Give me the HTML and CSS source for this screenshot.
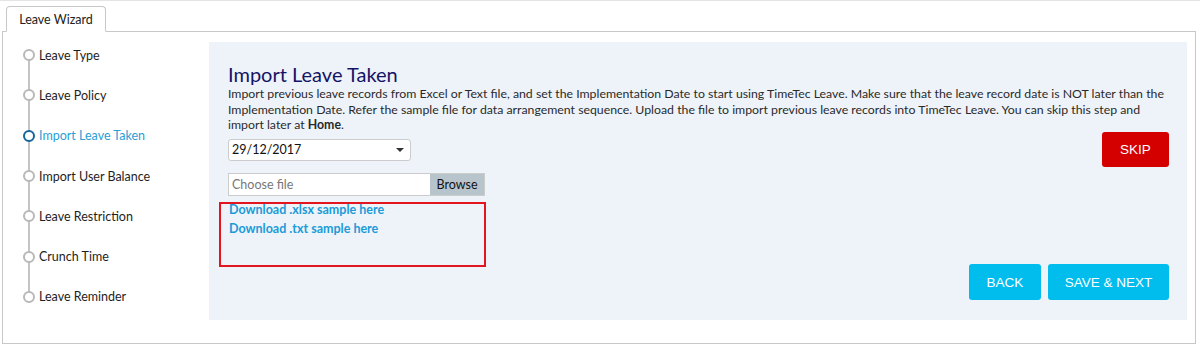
FILE: index.html
```html
<!DOCTYPE html>
<html lang="en">
<head>
  <meta charset="UTF-8">
  <title>Leave Wizard</title>
  <link rel="stylesheet" href="styles.css">
</head>
<body>
  <div class="tabs">
    <div class="tab">Leave Wizard</div>
  </div>
  <div class="wizard">
    <ul class="steps">
      <li class="step">Leave Type</li>
      <li class="step">Leave Policy</li>
      <li class="step active">Import Leave Taken</li>
      <li class="step">Import User Balance</li>
      <li class="step">Leave Restriction</li>
      <li class="step">Crunch Time</li>
      <li class="step">Leave Reminder</li>
    </ul>
    <div class="panel">
      <h1>Import Leave Taken</h1>
      <p class="intro">Import previous leave records from Excel or Text file, and set the Implementation Date to start using TimeTec Leave. Make sure that the leave record date is NOT later than the Implementation Date. Refer the sample file for data arrangement sequence. Upload the file to import previous leave records into TimeTec Leave. You can skip this step and import later at <b>Home</b>.</p>
      <div class="form-row">
        <div class="fields">
          <div class="select">
            <span>29/12/2017</span>
            <span class="caret"></span>
          </div>
          <div class="file">
            <span class="file-name">Choose file</span>
            <span class="browse">Browse</span>
          </div>
          <div class="samples">
            <a href="#">Download .xlsx sample here</a>
            <a href="#">Download .txt sample here</a>
          </div>
        </div>
        <div class="actions">
          <button class="btn skip">SKIP</button>
          <div class="nav">
            <button class="btn back">BACK</button>
            <button class="btn next">SAVE &amp; NEXT</button>
          </div>
        </div>
      </div>
    </div>
  </div>
</body>
</html>
```

FILE: styles.css
```css
body {
  margin: 0;
  font-family: Lato, "Liberation Sans", sans-serif;
  font-size: 12.5px;
  color: #222;
  background: #fff;
  border-top: 1px solid #e4e4e4;
}
.tabs {
  padding: 5px 0 0 6px;
  height: 26px;
}
.tab {
  width: 100px;
  height: 26px;
  box-sizing: border-box;
  border: 1px solid #c8c8c8;
  border-bottom: 1px solid #fff;
  border-radius: 4px 4px 0 0;
  background: #fff;
  text-align: center;
  line-height: 25px;
  font-size: 12.5px;
  position: relative;
  z-index: 1;
}
.wizard {
  display: flex;
  margin: -1px 4px 0 2px;
  height: 313px;
  box-sizing: border-box;
  border: 1px solid #c8c8c8;
}
.steps {
  list-style: none;
  margin: 0;
  padding: 3px 0 0 0;
  width: 206px;
  flex: none;
  position: relative;
}
.steps::before {
  content: "";
  position: absolute;
  left: 25px;
  top: 24px;
  height: 242px;
  width: 2px;
  background: #c4c4c4;
}
.step {
  height: 40.3px;
  display: flex;
  align-items: center;
  padding-left: 20px;
  position: relative;
  color: #1e1e1e;
}
.step::before {
  content: "";
  width: 8px;
  height: 8px;
  border: 2.5px solid #b8b8b8;
  border-radius: 50%;
  background: #fff;
  margin-right: 4px;
  flex: none;
}
.step.active {
  color: #2aa0d4;
}
.step.active::before {
  border-color: #15659d;
}
.panel {
  flex: 1;
  margin: 10px 8px 23px 0;
  background: #eef3fa;
  padding: 20px 18px 20px 19px;
  display: flex;
  flex-direction: column;
}
h1 {
  margin: 0;
  font-size: 20px;
  font-weight: normal;
  line-height: 24px;
  color: #141466;
}
.intro {
  margin: 0;
  line-height: 15.6px;
  font-size: 12.3px;
  color: #2a2a2a;
}
.form-row {
  flex: 1;
  display: flex;
  justify-content: space-between;
}
.fields {
  padding-top: 6px;
}
.select {
  width: 183px;
  height: 22px;
  box-sizing: border-box;
  border: 1px solid #ccc;
  border-radius: 3px;
  background: #fff;
  display: flex;
  align-items: center;
  justify-content: space-between;
  padding: 0 6px 0 3px;
  color: #111;
}
.caret {
  border-left: 4px solid transparent;
  border-right: 4px solid transparent;
  border-top: 4px solid #333;
}
.file {
  margin-top: 12px;
  width: 257px;
  height: 23px;
  display: flex;
  border: 1px solid #ccc;
  box-sizing: border-box;
  background: #fff;
}
.file-name {
  flex: 1;
  color: #777;
  line-height: 21px;
  padding-left: 3px;
}
.browse {
  width: 54px;
  background: #b8c4cc;
  text-align: center;
  line-height: 21px;
  color: #111;
}
.samples {
  margin: 6px 0 0 -9px;
  width: 267px;
  height: 65px;
  box-sizing: border-box;
  border: 2px solid #e3161f;
  padding: 0 0 0 8px;
  display: flex;
  flex-direction: column;
}
.samples a {
  color: #1b9bd7;
  font-weight: bold;
  text-decoration: none;
  line-height: 19px;
  height: 19px;
  margin-top: -4px;
}
.samples a + a {
  margin-top: 0;
}
.actions {
  display: flex;
  flex-direction: column;
  justify-content: space-between;
  align-items: flex-end;
  margin-top: -1px;
}
.btn {
  border: none;
  border-radius: 3px;
  color: #fff;
  font-family: "Liberation Sans", Arial, sans-serif;
  font-size: 13.5px;
  cursor: pointer;
}
.skip {
  width: 67px;
  height: 35px;
  background: #d40000;
}
.nav {
  display: flex;
  gap: 7px;
}
.back,
.next {
  height: 36px;
  background: #00bdee;
}
.back {
  width: 72px;
}
.next {
  width: 121px;
}
```
